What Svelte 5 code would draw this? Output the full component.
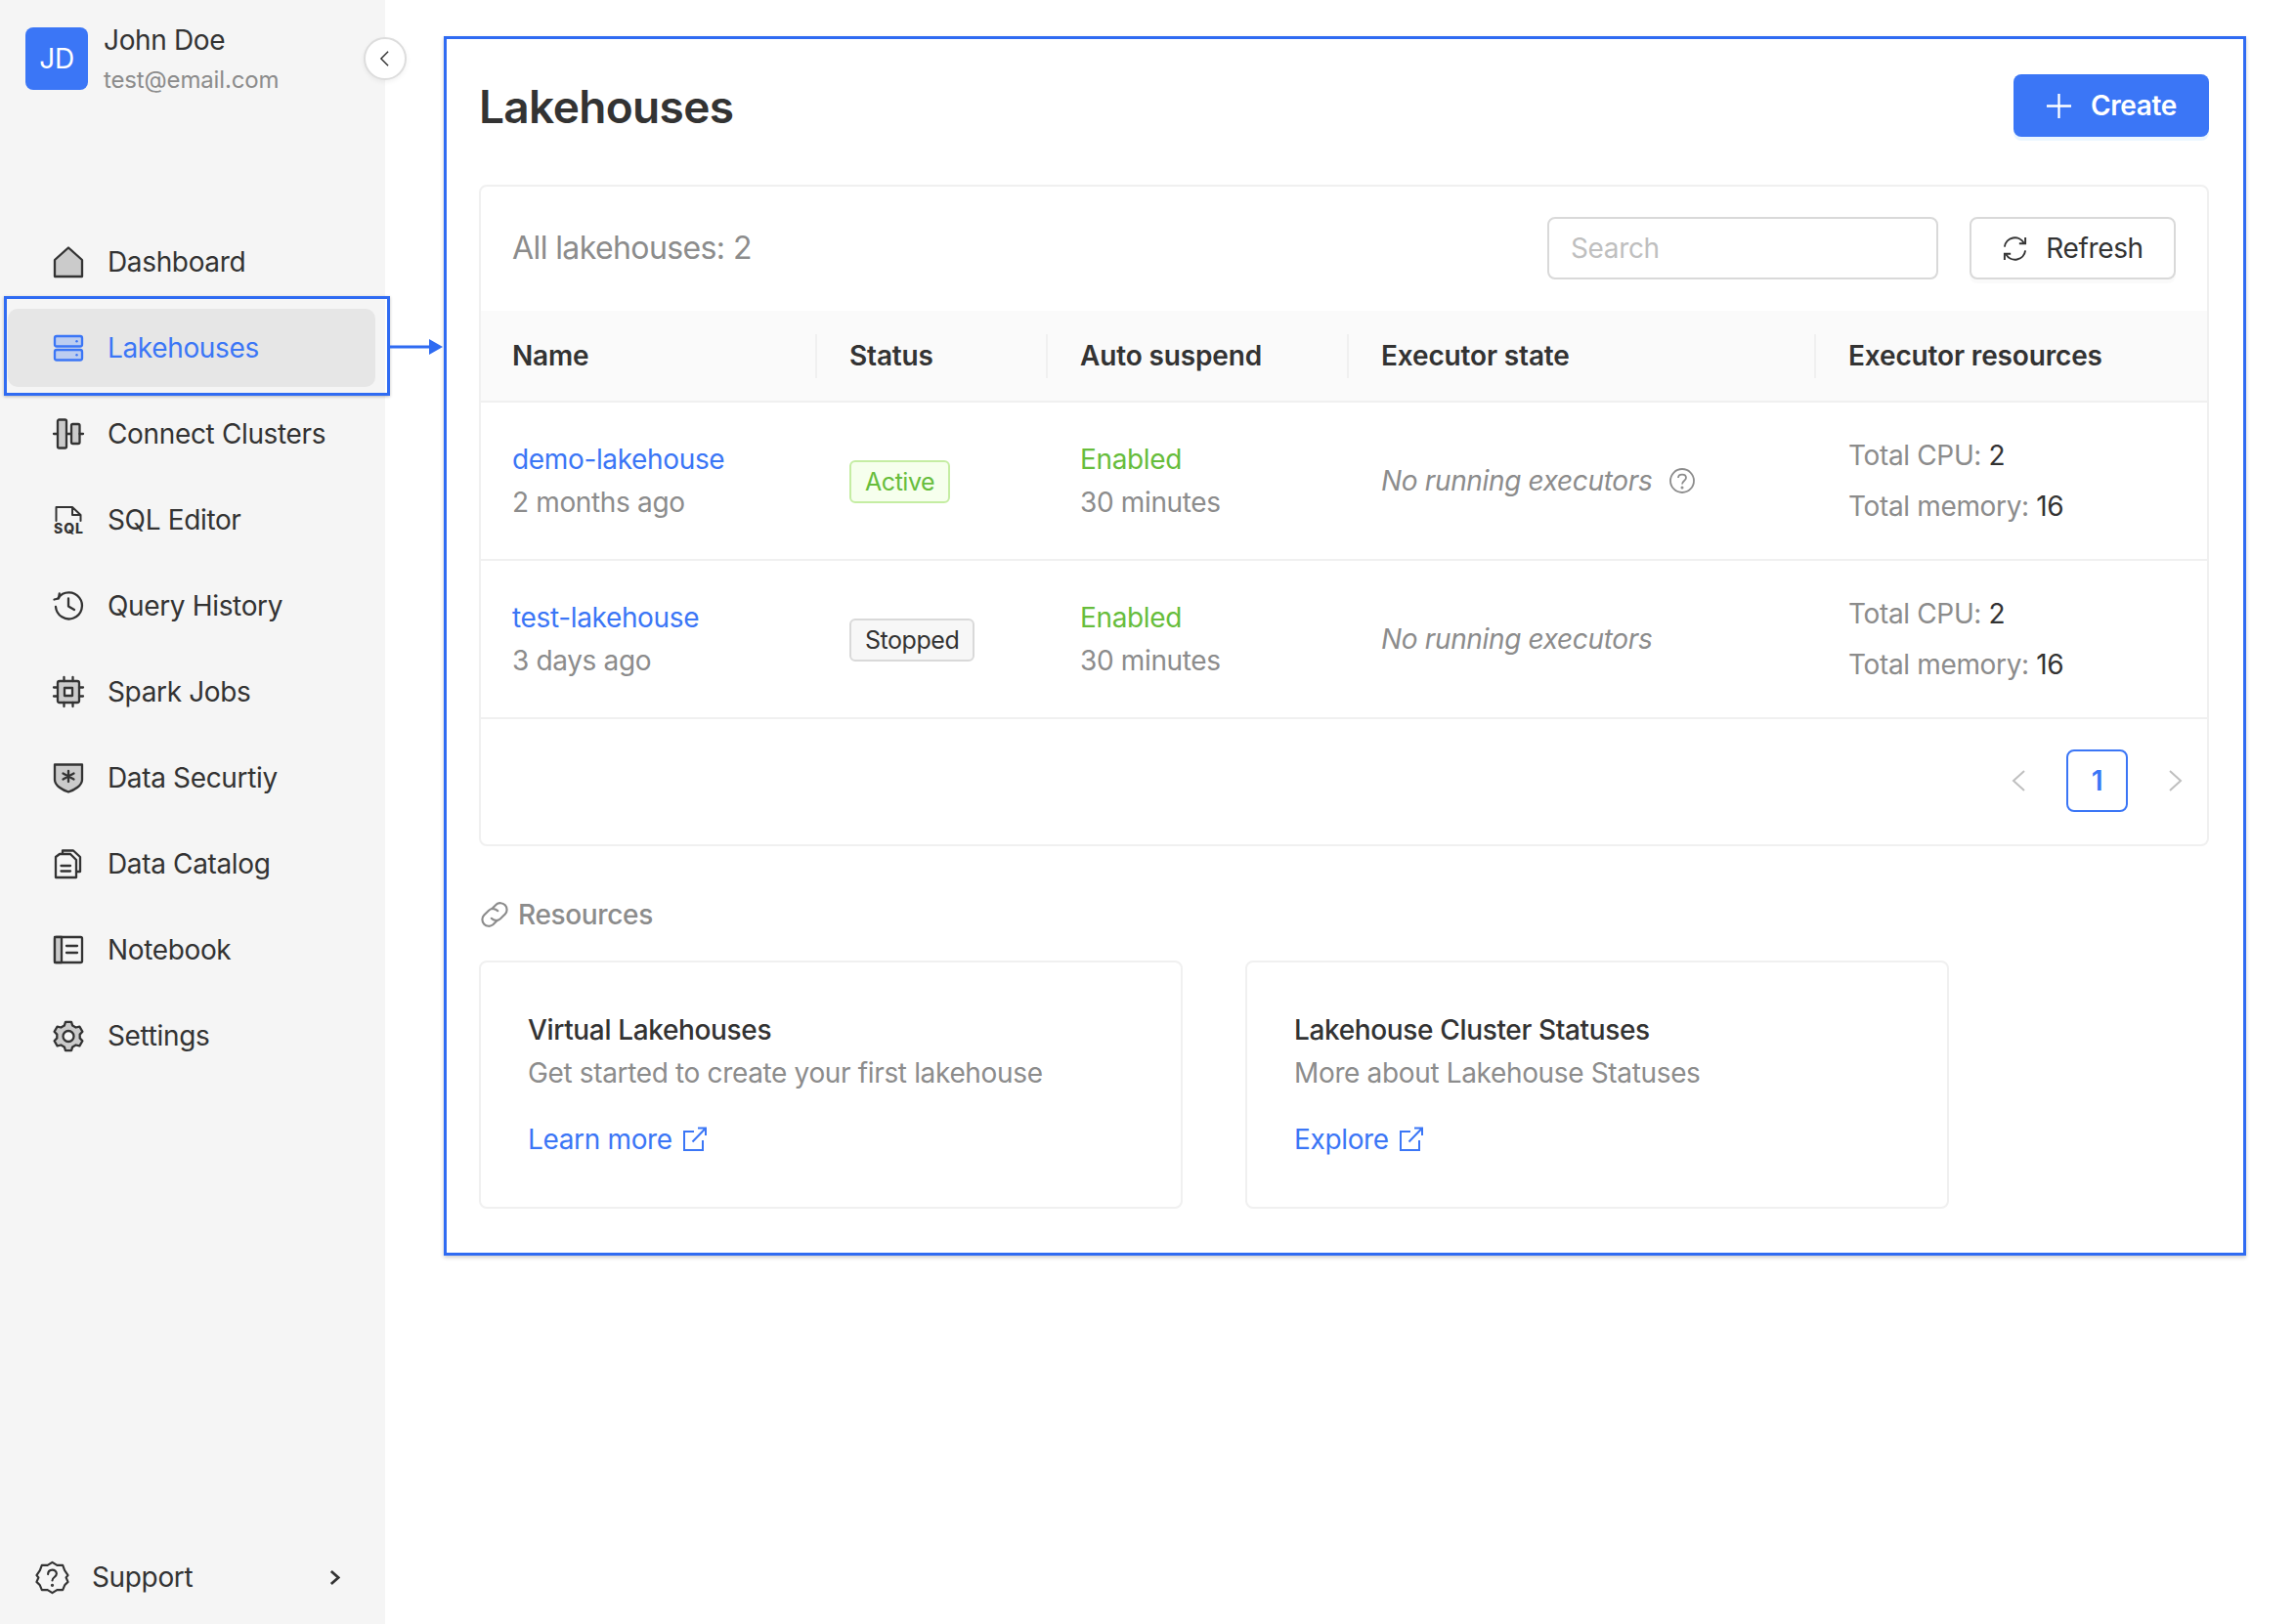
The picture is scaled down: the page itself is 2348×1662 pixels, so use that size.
<script>
  const navItems = [
    { icon: 'home', label: 'Dashboard' },
    { icon: 'server', label: 'Lakehouses', active: true },
    { icon: 'clusters', label: 'Connect Clusters' },
    { icon: 'sql', label: 'SQL Editor' },
    { icon: 'history', label: 'Query History' },
    { icon: 'chip', label: 'Spark Jobs' },
    { icon: 'shield', label: 'Data Securtiy' },
    { icon: 'catalog', label: 'Data Catalog' },
    { icon: 'notebook', label: 'Notebook' },
    { icon: 'gear', label: 'Settings' }
  ];

  const rows = [
    { name: 'demo-lakehouse', age: '2 months ago', status: 'Active', help: true },
    { name: 'test-lakehouse', age: '3 days ago', status: 'Stopped', help: false }
  ];

  const resources = [
    { title: 'Virtual Lakehouses', text: 'Get started to create your first lakehouse', link: 'Learn more' },
    { title: 'Lakehouse Cluster Statuses', text: 'More about Lakehouse Statuses', link: 'Explore' }
  ];
</script>

{#snippet navIcon(name)}
  <svg class="ico" viewBox="0 0 32 32" fill="none" stroke="currentColor" stroke-width="2.3" stroke-linejoin="round" stroke-linecap="round">
    {#if name === 'home'}
      <path d="M2 14 16 1.5 30 14V31H2Z" fill="#cbcbcb" />
    {:else if name === 'server'}
      <rect x="2" y="4" width="28" height="10.5" rx="2" fill="#bccdf0" />
      <rect x="2" y="18" width="28" height="10.5" rx="2" fill="#bccdf0" />
      <circle cx="24.5" cy="9.2" r="1.2" fill="currentColor" stroke="none" />
      <circle cx="24.5" cy="23.2" r="1.2" fill="currentColor" stroke="none" />
    {:else if name === 'clusters'}
      <rect x="5" y="1.5" width="9" height="29" rx="1.5" fill="#cbcbcb" />
      <rect x="19" y="6" width="8.5" height="20" rx="1.5" fill="#cbcbcb" />
      <path d="M1 16H5M14 16H19M27.5 16H31" />
    {:else if name === 'sql'}
      <path d="M3.5 17V3H20L28.5 11V17M20 3V11H28.5" stroke-width="2" />
      <text x="16.500" y="30" text-anchor="middle" class="sql-text">SQL</text>
    {:else if name === 'history'}
      <path d="M5.500 8A13.500 13.500 0 1 1 3 17" />
      <path d="M1.500 9.500 6 8.500 6.800 3.500" />
      <path d="M16 8.500V16.500L22 20" />
    {:else if name === 'chip'}
      <rect x="5" y="5" width="22" height="22" rx="2" fill="#cbcbcb" />
      <rect x="12" y="12" width="8" height="8" fill="#f5f5f5" />
      <path d="M11.500 1V5M20.500 1V5M11.500 27V31M20.500 27V31M1 11.500H5M1 20.500H5M27 11.500H31M27 20.500H31" />
    {:else if name === 'shield'}
      <path d="M2 2.500H30V18C30 24 22 28.500 16 30.500 10 28.500 2 24 2 18Z" fill="#cbcbcb" />
      <path d="M16 9V20M10.500 11.500 21.500 17.500M21.500 11.500 10.500 17.500" fill="none" />
    {:else if name === 'catalog'}
      <path d="M10 6V2.500H21L28 9V24H24" />
      <path d="M7 6H18L24 12V30H3V9Z" fill="#f5f5f5" />
      <path d="M8.500 18H18M8.500 23.500H18" />
    {:else if name === 'notebook'}
      <rect x="2" y="3" width="28" height="26" rx="1.500" />
      <path d="M2 3H9V29H2Z" fill="#cbcbcb" />
      <path d="M14 12H25M14 19H25" />
    {:else if name === 'gear'}
      <path d="M13 1.800H19L20.200 5.600 23.600 7.500 27.400 6.600 30.400 11.800 27.700 14.600V18.400L30.400 21.200 27.400 26.400 23.600 25.500 20.200 27.400 19 31.200H13L11.800 27.400 8.400 25.500 4.600 26.400 1.600 21.200 4.300 18.400V14.600L1.600 11.800 4.600 6.600 8.400 7.500 11.800 5.600Z" fill="#cbcbcb" />
      <circle cx="16" cy="16.500" r="5.500" fill="#f5f5f5" />
    {/if}
  </svg>
{/snippet}

{#snippet externalIcon()}
  <svg class="ext" viewBox="0 0 26 26" fill="none" stroke="currentColor" stroke-width="2">
    <path d="M12 5H2V24H21V14" />
    <path d="M10.500 15.500 23.500 2M16 1.500H24V9" />
  </svg>
{/snippet}

<div class="page">
  <aside class="sidebar">
    <header class="user">
      <div class="avatar">JD</div>
      <div>
        <div class="user-name">John Doe</div>
        <div class="user-mail">test@email.com</div>
      </div>
      <button class="collapse" aria-label="Collapse">
        <svg viewBox="0 0 12 20" fill="none" stroke="currentColor" stroke-width="1.6"><path d="M10 2 2 10 10 18" /></svg>
      </button>
    </header>

    <nav class="nav">
      {#each navItems as item}
        <div class="nav-item" class:is-active={item.active}>
          {@render navIcon(item.icon)}
          <span>{item.label}</span>
          {#if item.active}
            <div class="marker"></div>
            <svg class="marker-arrow" viewBox="0 0 54 20">
              <path d="M0 10H42" stroke="#2f6bf2" stroke-width="3" />
              <path d="M40 2 54 10 40 18Z" fill="#2f6bf2" />
            </svg>
          {/if}
        </div>
      {/each}
    </nav>

    <div class="support">
      <svg class="support-ico" viewBox="0 0 36 36" fill="none" stroke="currentColor" stroke-width="2.2" stroke-linejoin="round" stroke-linecap="round">
        <path d="M18 2 23 5H29L31 10.500 34.500 15.500 32.500 18 34.500 22.500 31 26 29 31H23L18 34 13 31H7L5 26 1.500 22.500 3.500 18 1.500 15.500 5 10.500 7 5H13Z" />
        <path d="M13.500 14.500C13.500 8.500 22.500 8.500 22.500 14 22.500 17.500 18 17.500 18 21" />
        <circle cx="18" cy="26" r="0.6" fill="currentColor" />
      </svg>
      <span>Support</span>
      <svg class="support-arrow" viewBox="0 0 12 18" fill="none" stroke="currentColor" stroke-width="3"><path d="M2 2 10 9 2 16" /></svg>
    </div>
  </aside>

  <main class="frame">
    <div class="title-row">
      <h1>Lakehouses</h1>
      <button class="btn-create">
        <svg viewBox="0 0 28 28" stroke="currentColor" stroke-width="2.4"><path d="M14 1V27M1 14H27" /></svg>
        Create
      </button>
    </div>

    <section class="card">
      <div class="toolbar">
        <div class="count">All lakehouses: 2</div>
        <input class="search" placeholder="Search" />
        <button class="btn-refresh">
          <svg viewBox="0 0 28 28" fill="none" stroke="currentColor" stroke-width="2">
            <path d="M3 12A11 11 0 0 1 23.500 8" />
            <path d="M25 2V8.500H18.500" />
            <path d="M25 16A11 11 0 0 1 4.500 20" />
            <path d="M3 26V19.500H9.500" />
          </svg>
          Refresh
        </button>
      </div>

      <table>
        <colgroup>
          <col class="c1" /><col class="c2" /><col class="c3" /><col class="c4" /><col />
        </colgroup>
        <thead>
          <tr>
            <th>Name</th>
            <th>Status</th>
            <th>Auto suspend</th>
            <th>Executor state</th>
            <th>Executor resources</th>
          </tr>
        </thead>
        <tbody>
          {#each rows as row}
            <tr>
              <td>
                <div class="link">{row.name}</div>
                <div class="muted">{row.age}</div>
              </td>
              <td>
                <span class="tag" class:tag-active={row.status === 'Active'}>{row.status}</span>
              </td>
              <td>
                <div class="enabled">Enabled</div>
                <div class="muted">30 minutes</div>
              </td>
              <td>
                <div class="executors">
                  <em>No running executors</em>
                  {#if row.help}
                    <svg class="help" viewBox="0 0 28 28" fill="none" stroke="currentColor" stroke-width="1.8">
                      <circle cx="14" cy="14" r="12" />
                      <path d="M10 11C10 6.500 18 6.500 18 11 18 14 14 14 14 17.500" />
                      <circle cx="14" cy="21" r="0.6" />
                    </svg>
                  {/if}
                </div>
              </td>
              <td>
                <div class="res"><span class="muted">Total CPU:</span> 2</div>
                <div class="res"><span class="muted">Total memory:</span> 16</div>
              </td>
            </tr>
          {/each}
        </tbody>
      </table>

      <div class="pager">
        <svg class="pager-arrow" viewBox="0 0 20 26" fill="none" stroke="currentColor" stroke-width="2"><path d="M15 3 4 13 15 23" /></svg>
        <div class="page-num">1</div>
        <svg class="pager-arrow" viewBox="0 0 20 26" fill="none" stroke="currentColor" stroke-width="2"><path d="M5 3 16 13 5 23" /></svg>
      </div>
    </section>

    <div class="res-label">
      <svg viewBox="0 0 26 26" fill="none" stroke="currentColor" stroke-width="2" stroke-linecap="round">
        <path d="M10.500 7.500 14.500 3.500A6.200 6.200 0 0 1 23 12.500L18.500 17A6 6 0 0 1 10 16.500" />
        <path d="M15.500 18.500 11.500 22.500A6.200 6.200 0 0 1 3 13.500L7.500 9A6 6 0 0 1 16 9.500" />
      </svg>
      Resources
    </div>

    <div class="res-cards">
      {#each resources as res}
        <div class="res-card">
          <div class="res-title">{res.title}</div>
          <div class="muted">{res.text}</div>
          <div class="res-link">{res.link} {@render externalIcon()}</div>
        </div>
      {/each}
    </div>
  </main>
</div>

<style>
  :global(body) {
    margin: 0;
    background: #fff;
  }

  .page {
    display: flex;
    height: 1662px;
    font-family: Inter, "Noto Sans", sans-serif;
    font-size: 28px;
    line-height: 44px;
    letter-spacing: -0.35px;
    color: #333;
  }

  .sidebar {
    width: 394px;
    flex: none;
    display: flex;
    flex-direction: column;
    background: #f5f5f5;
    position: relative;
  }

  .user {
    display: flex;
    gap: 16px;
    padding: 20px 0 0 26px;
    position: relative;
  }

  .avatar {
    width: 64px;
    height: 64px;
    margin-top: 8px;
    border-radius: 8px;
    background: #3b76f6;
    color: #fff;
    display: flex;
    align-items: center;
    justify-content: center;
  }

  .user-name {
    line-height: 42px;
  }

  .user-mail {
    font-size: 24px;
    letter-spacing: -0.15px;
    line-height: 39px;
    color: #8c8c8c;
  }

  .collapse {
    position: absolute;
    left: 372px;
    top: 38px;
    width: 44px;
    height: 44px;
    padding: 0 2px 0 0;
    border-radius: 50%;
    border: 2px solid #ddd;
    background: #fff;
    color: #333;
    box-shadow: 0 2px 5px rgba(0, 0, 0, 0.06);
    display: flex;
    align-items: center;
    justify-content: center;
  }

  .collapse svg {
    width: 11px;
    height: 18px;
  }

  .nav {
    margin-top: 127px;
    padding: 0 10px 0 8px;
    display: flex;
    flex-direction: column;
    gap: 8px;
  }

  .nav-item {
    height: 80px;
    padding-left: 46px;
    display: flex;
    align-items: center;
    gap: 24px;
    border-radius: 10px;
    position: relative;
  }

  .nav-item.is-active {
    background: #e6e6e6;
    color: #3b76f6;
  }

  .ico {
    width: 32px;
    height: 32px;
    flex: none;
    overflow: visible;
  }

  .sql-text {
    font-size: 14px;
    font-weight: 800;
    fill: currentColor;
    stroke: none;
    letter-spacing: 1px;
  }

  .marker {
    position: absolute;
    left: -4px;
    top: -13px;
    width: 395px;
    height: 102px;
    box-sizing: border-box;
    border: 3px solid #2f6bf2;
    box-shadow: 0 1px 3px rgba(0, 0, 0, 0.25);
  }

  .marker-arrow {
    position: absolute;
    left: 391px;
    top: 29px;
    width: 54px;
    height: 20px;
  }

  .support {
    margin-top: auto;
    margin-bottom: 26px;
    height: 44px;
    padding: 0 46px 0 36px;
    display: flex;
    align-items: center;
    gap: 23px;
  }

  .support-ico {
    width: 35px;
    height: 35px;
    flex: none;
  }

  .support-arrow {
    width: 11px;
    height: 17px;
    margin-left: auto;
  }

  .frame {
    box-sizing: border-box;
    width: 1844px;
    height: 1248px;
    margin: 37px 0 0 60px;
    padding: 36px 35px 0 33px;
    border: 3px solid #2f6bf2;
    box-shadow: 0 2px 4px rgba(0, 0, 0, 0.2);
  }

  .title-row {
    display: flex;
    align-items: center;
    justify-content: space-between;
    height: 64px;
    margin-bottom: 49px;
  }

  h1 {
    margin: 2px 0 0;
    font-size: 46px;
    font-weight: 600;
    letter-spacing: -0.65px;
    line-height: 64px;
  }

  button {
    font-family: inherit;
    font-size: 28px;
    letter-spacing: inherit;
  }

  .btn-create {
    width: 200px;
    height: 64px;
    border: 0;
    border-radius: 8px;
    background: #3b76f6;
    color: #fff;
    font-weight: 600;
    display: flex;
    align-items: center;
    justify-content: center;
    gap: 19px;
    box-shadow: 0 4px 0 rgba(5, 145, 255, 0.08);
  }

  .btn-create svg {
    width: 27px;
    height: 27px;
  }

  .card {
    box-sizing: border-box;
    height: 677px;
    border: 2px solid #f0f0f0;
    border-radius: 8px;
  }

  .toolbar {
    height: 127px;
    box-sizing: border-box;
    padding: 31px 32px 0 32px;
    display: flex;
    align-items: flex-start;
    gap: 32px;
  }

  .count {
    margin-right: auto;
    font-size: 32px;
    letter-spacing: -0.6px;
    line-height: 64px;
    color: #8c8c8c;
  }

  .search {
    box-sizing: border-box;
    width: 400px;
    height: 64px;
    padding: 0 22px;
    border: 2px solid #d9d9d9;
    border-radius: 8px;
    font-family: inherit;
    font-size: 28px;
    letter-spacing: inherit;
    color: #333;
  }

  .search::placeholder {
    color: #bfbfbf;
  }

  .btn-refresh {
    box-sizing: border-box;
    width: 211px;
    height: 64px;
    padding: 0;
    background: #fff;
    border: 2px solid #d9d9d9;
    border-radius: 8px;
    color: #333;
    display: flex;
    align-items: center;
    justify-content: center;
    gap: 18px;
    box-shadow: 0 4px 0 rgba(0, 0, 0, 0.02);
  }

  .btn-refresh svg {
    width: 27px;
    height: 27px;
  }

  table {
    width: 100%;
    table-layout: fixed;
    border-collapse: separate;
    border-spacing: 0;
  }

  .c1 {
    width: 344px;
  }

  .c2 {
    width: 236px;
  }

  .c3 {
    width: 308px;
  }

  .c4 {
    width: 478px;
  }

  th,
  td {
    padding: 0 0 0 33px;
    text-align: left;
    box-sizing: border-box;
    border-bottom: 2px solid #f0f0f0;
  }

  th:first-child,
  td:first-child {
    padding-left: 32px;
  }

  th {
    height: 94px;
    background: #fafafa;
    font-weight: 600;
    letter-spacing: -0.15px;
    position: relative;
  }

  th:not(:last-child)::after {
    content: '';
    position: absolute;
    right: 0;
    top: 24px;
    height: 45px;
    width: 2px;
    background: #f0f0f0;
  }

  td {
    height: 162px;
    font-weight: 400;
  }

  .link,
  .res-link {
    color: #3b76f6;
  }

  .muted {
    color: #8c8c8c;
  }

  .enabled {
    color: #67bd3c;
  }

  .tag {
    display: inline-block;
    box-sizing: border-box;
    height: 44px;
    padding: 0 14px;
    border: 2px solid #d9d9d9;
    border-radius: 6px;
    background: #f7f7f7;
    font-size: 25px;
    letter-spacing: -0.45px;
    line-height: 40px;
    vertical-align: middle;
  }

  .tag-active {
    border-color: #c5eda3;
    background: #f6ffed;
    color: #67bd3c;
  }

  .executors {
    display: flex;
    align-items: center;
    gap: 17px;
    color: #8c8c8c;
  }

  .help {
    width: 28px;
    height: 28px;
  }

  .res {
    line-height: 52px;
  }

  .pager {
    height: 126px;
    padding-right: 23px;
    display: flex;
    align-items: center;
    justify-content: flex-end;
    gap: 38px;
  }

  .pager-arrow {
    width: 20px;
    height: 26px;
    color: #bfbfbf;
  }

  .page-num {
    box-sizing: border-box;
    width: 63px;
    height: 64px;
    border: 2px solid #3b76f6;
    border-radius: 8px;
    color: #3b76f6;
    font-weight: 600;
    line-height: 60px;
    text-align: center;
  }

  .res-label {
    margin: 48px 0 25px;
    padding-left: 2px;
    display: flex;
    align-items: center;
    gap: 10px;
    color: #8c8c8c;
    font-weight: 500;
  }

  .res-label svg {
    width: 28px;
    height: 28px;
  }

  .res-cards {
    display: flex;
    gap: 64px;
  }

  .res-card {
    box-sizing: border-box;
    width: 720px;
    height: 254px;
    padding: 47px 47px 47px 48px;
    border: 2px solid #f0f0f0;
    border-radius: 8px;
  }

  .res-title {
    font-weight: 500;
  }

  .res-link {
    margin-top: 24px;
    display: flex;
    align-items: center;
    gap: 10px;
  }

  .ext {
    width: 26px;
    height: 26px;
  }
</style>
